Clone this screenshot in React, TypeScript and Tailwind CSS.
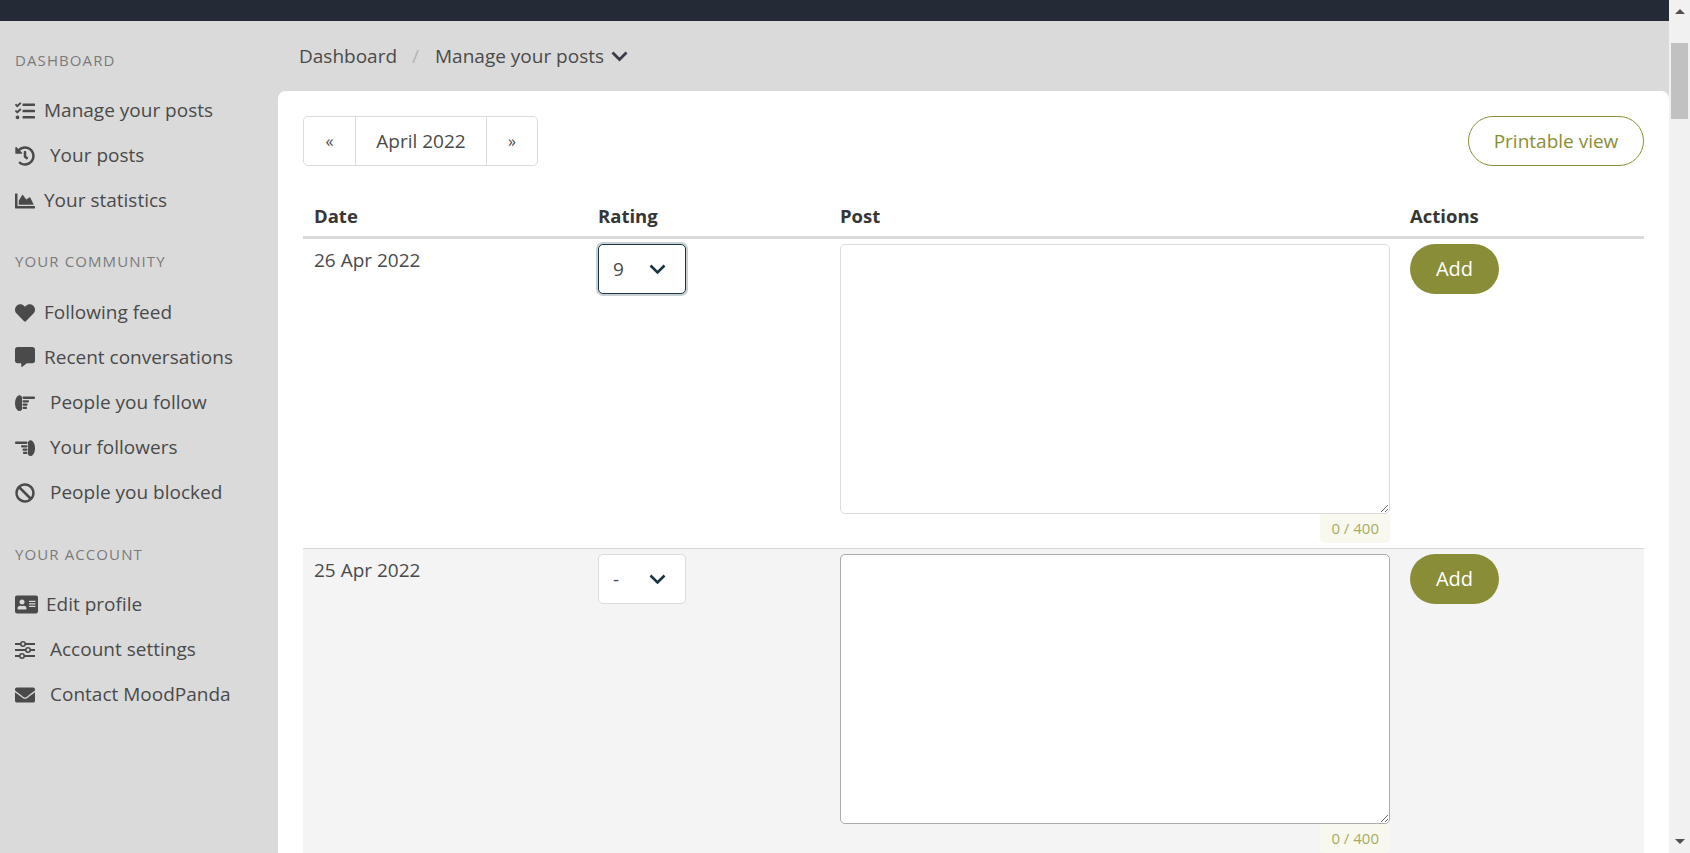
import { FaTasks, FaHistory, FaChartArea, FaHeart, FaCommentAlt, FaBan, FaAddressCard, FaEnvelope } from "react-icons/fa";
import type { ReactNode } from "react";

const font = "font-['Open_Sans',sans-serif]";

const PointingHand = ({ flip }: { flip?: boolean }) => (
  <svg width="20" height="16" viewBox="0 0 20 16" fill="#4a4a4a" className={flip ? "-scale-x-100" : ""}>
    <path d="M3.5 0.5C5.5 0 7 1 7 3V14C7 15.5 5.5 16 4 16 1.5 15.5 0 12 0 8 0 4.5 1.5 1.5 3.5 0.5Z" />
    <rect x="7.5" y="1.5" width="12.5" height="2.6" rx="1" />
    <rect x="7.5" y="5.2" width="6.5" height="2.2" rx="0.8" />
    <rect x="7.5" y="8.5" width="5" height="2.2" rx="0.8" />
    <rect x="7.5" y="11.8" width="4.5" height="2.2" rx="0.8" />
  </svg>
);

const SlidersIcon = () => (
  <svg width="20" height="18" viewBox="0 0 20 18" fill="none" stroke="#4a4a4a">
    <path d="M0 3H6M10 3H20M0 9H11M15 9H20M0 15H5M9 15H20" strokeWidth="2" />
    <circle cx="8" cy="3" r="2.2" strokeWidth="1.6" />
    <circle cx="13" cy="9" r="2.2" strokeWidth="1.6" />
    <circle cx="7" cy="15" r="2.2" strokeWidth="1.6" />
  </svg>
);

const NavItem = ({ icon, label, gap }: { icon: ReactNode; label: string; gap: string }) => (
  <a className="flex h-[45px] items-center text-[#4a4a4a]">
    <span className="flex w-5 shrink-0 items-center text-[20px] text-[#4a4a4a]">{icon}</span>
    <span className={`${gap} text-[19px]`}>{label}</span>
  </a>
);

const Heading = ({ children, className }: { children: string; className: string }) => (
  <p className={`text-[15px] uppercase tracking-[1.1px] text-[#7a7a7a] ${className}`}>{children}</p>
);

const Sidebar = () => (
  <aside className="w-[278px] shrink-0 pl-[15px]">
    <Heading className="mt-[29px] mb-[18px] leading-[20px]">Dashboard</Heading>
    <NavItem icon={<FaTasks />} label="Manage your posts" gap="ml-[9px]" />
    <NavItem icon={<FaHistory />} label="Your posts" gap="ml-[15px]" />
    <NavItem icon={<FaChartArea />} label="Your statistics" gap="ml-[9px]" />
    <Heading className="mt-[28px] mb-[19px] leading-[20px]">Your community</Heading>
    <NavItem icon={<FaHeart />} label="Following feed" gap="ml-[9px]" />
    <NavItem icon={<FaCommentAlt className="mt-[-2px]" />} label="Recent conversations" gap="ml-[9px]" />
    <NavItem icon={<PointingHand />} label="People you follow" gap="ml-[15px]" />
    <NavItem icon={<PointingHand flip />} label="Your followers" gap="ml-[15px]" />
    <NavItem icon={<FaBan />} label="People you blocked" gap="ml-[15px]" />
    <Heading className="mt-[29px] mb-[18px] leading-[20px]">Your account</Heading>
    <NavItem icon={<FaAddressCard className="shrink-0 text-[23px]" />} label="Edit profile" gap="ml-[11px]" />
    <NavItem icon={<SlidersIcon />} label="Account settings" gap="ml-[15px]" />
    <NavItem icon={<FaEnvelope />} label="Contact MoodPanda" gap="ml-[15px]" />
  </aside>
);

const Row = ({ date, rating, focused, shaded }: { date: string; rating: string; focused?: boolean; shaded?: boolean }) => (
  <tr className={`border-b border-[#d8d8d8] align-top ${shaded ? "bg-[#f4f4f4]" : ""}`}>
    <td className="pl-[11px] pt-[5px] text-[19px] leading-[40px] text-[#4a4a4a]">
      <span className="relative top-[-4px]">{date}</span>
    </td>
    <td className="pl-[11px] pt-[5px]">
      <div className="relative ml-[-1px] h-[50px] w-[88px]">
        <select
          defaultValue={rating}
          className={`h-[50px] w-full appearance-none rounded-[5px] border bg-white pl-[14px] pt-[2px] text-[19px] text-[#4a4a4a] outline-none ${
            focused
              ? "border-[#1b3444] shadow-[0_0_0_2px_#c8d0d4]"
              : "border-[#dbdbdb]"
          }`}
        >
          <option>{rating}</option>
        </select>
        <svg className="absolute right-[20px] top-[20px]" width="17" height="11" viewBox="0 0 17 11" fill="none">
          <path d="M1.5 1.5 8.5 8.5 15.5 1.5" stroke="#1b3444" strokeWidth="2.6" />
        </svg>
      </div>
    </td>
    <td className="pl-[11px] pt-[5px] pb-[5px]">
      <div className="flex w-[550px] flex-col items-end">
        <textarea
          className={`block h-[270px] w-full resize-y rounded-[5px] border bg-white outline-none ${
            shaded ? "border-[#ababab]" : "border-[#dbdbdb]"
          }`}
        />
        <span className="h-[29px] rounded-b-[5px] bg-[#f8f8ef] px-[11px] text-[15px] leading-[29px] text-[#a9ab63]">0 / 400</span>
      </div>
    </td>
    <td className="pl-[11px] pt-[5px]">
      <button className="h-[50px] w-[89px] rounded-full bg-[#8a8d37] pt-[1px] text-[20px] text-white">Add</button>
    </td>
  </tr>
);

const Scrollbar = () => (
  <div className="flex w-[21px] shrink-0 flex-col items-center bg-[#f1f1f1]">
    <div className="mt-[9px] h-0 w-0 border-x-[5px] border-b-[5px] border-x-transparent border-b-[#505050]" />
    <div className="mt-[29px] h-[76px] w-[17px] bg-[#c1c1c1]" />
    <div className="mt-auto mb-[9px] h-0 w-0 border-x-[5px] border-t-[5px] border-x-transparent border-t-[#505050]" />
  </div>
);

export default function App() {
  return (
    <div className={`flex h-[853px] w-full overflow-hidden bg-[#dadada] ${font}`}>
      <div className="flex min-w-0 flex-1 flex-col">
        <div className="h-[21px] shrink-0 bg-[#252a37]" />
        <div className="flex min-h-0 flex-1">
          <Sidebar />
          <main className="flex min-w-0 flex-1 flex-col">
            <nav className="flex h-[70px] shrink-0 items-center pl-[21px] text-[19px] text-[#4a4a4a]">
              <span>Dashboard</span>
              <span className="ml-[15px] mr-[16px] text-[#b5b5b5]">/</span>
              <span>Manage your posts</span>
              <svg className="ml-[7px]" width="17" height="11" viewBox="0 0 17 11" fill="none">
                <path d="M1.5 1.5 8.5 8.5 15.5 1.5" stroke="#3a3a4a" strokeWidth="2.8" />
              </svg>
            </nav>
            <section className="min-h-0 flex-1 overflow-hidden rounded-t-[8px] bg-white px-[25px] pt-[25px]">
              <div className="flex items-start justify-between">
                <div className="flex h-[50px] rounded-[5px] border border-[#dbdbdb] text-[#4a4a4a]">
                  <button className="w-[51px] text-[16px]">«</button>
                  <span className="flex w-[132px] items-center justify-center border-x border-[#dbdbdb] text-[19px]">April 2022</span>
                  <button className="w-[50px] text-[16px]">»</button>
                </div>
                <button className="h-[50px] w-[176px] rounded-full border border-[#8a8d37] text-[19px] text-[#8a8d37]">Printable view</button>
              </div>
              <table className="mt-[25px] w-[1341px] table-fixed border-collapse">
                <colgroup>
                  <col className="w-[285px]" />
                  <col className="w-[241px]" />
                  <col className="w-[570px]" />
                  <col className="w-[245px]" />
                </colgroup>
                <thead>
                  <tr className="border-b-[3px] border-[#dadada] text-left text-[18.5px] font-bold text-[#363636]">
                    <th className="h-[46px] pl-[11px] pt-[6px]">Date</th>
                    <th className="pl-[10px] pt-[6px]">Rating</th>
                    <th className="pl-[11px] pt-[6px]">Post</th>
                    <th className="pl-[11px] pt-[6px]">Actions</th>
                  </tr>
                </thead>
                <tbody>
                  <Row date="26 Apr 2022" rating="9" focused />
                  <Row date="25 Apr 2022" rating="-" shaded />
                </tbody>
              </table>
            </section>
          </main>
        </div>
      </div>
      <Scrollbar />
    </div>
  );
}
